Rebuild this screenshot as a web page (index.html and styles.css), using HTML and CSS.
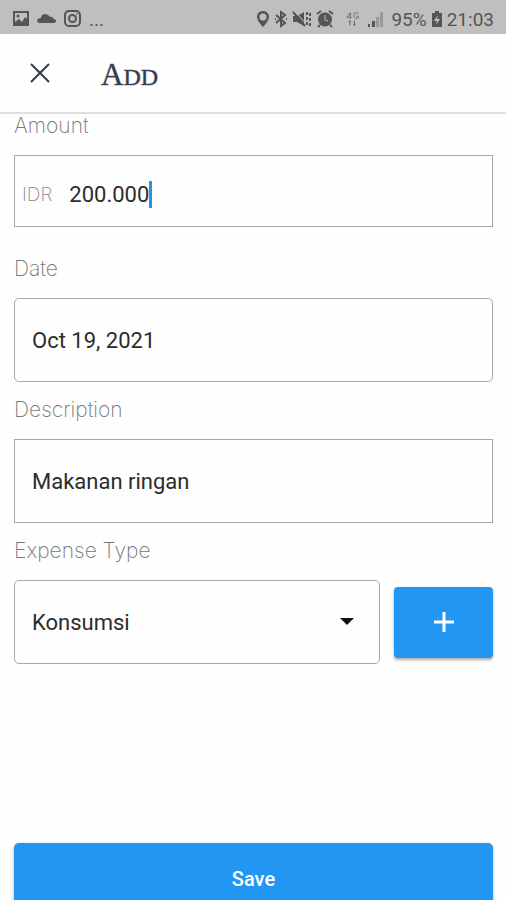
FILE: index.html
```html
<!DOCTYPE html>
<html lang="en">
<head>
<meta charset="utf-8">
<meta name="viewport" content="width=device-width, initial-scale=1">
<title>Add</title>
<link rel="stylesheet" href="styles.css">
</head>
<body>
<div class="status-bar">
  <div class="status-group status-left">
    <svg width="18" height="18" viewBox="0 0 18 18"><path fill-rule="evenodd" d="M1 1h16v15H1zM3 3v9l4-3 3 3 3-5 2 2V3z"/><circle cx="6" cy="6" r="1.5"/></svg>
    <svg width="20" height="18" viewBox="0 0 20 18"><path d="M3 13c-2 0-3-1-3-2.500S2 8 4 8c0-3 2-4 4-4 3 0 4 2 5 3 2-.5 3 .5 3.500 2 2 0 2.500 1 2.500 2s-1 2-2 2z"/></svg>
    <svg class="line-icon" width="18" height="18" viewBox="0 0 18 18"><rect x="1" y="1" width="15" height="15" rx="4"/><circle cx="8.500" cy="8.500" r="3.500"/><path d="M12.500 4h1"/></svg>
    <span class="more">...</span>
  </div>
  <div class="status-group status-right">
    <svg width="14" height="18" viewBox="0 0 14 18"><path fill-rule="evenodd" d="M7 1C3.500 1 1 3.500 1 7c0 4 6 10 6 10s6-6 6-10c0-3.500-2.500-6-6-6zm0 2.500a3.500 3.500 0 1 1 0 7 3.500 3.500 0 0 1 0-7z"/></svg>
    <svg class="line-icon" width="14" height="18" viewBox="0 0 14 18"><path d="M2 5l9 8-4 3V2l4 3-9 8M1 9h1M12 9h1"/></svg>
    <svg width="20" height="18" viewBox="0 0 20 18"><path d="M1 6h4l7-4v14l-7-4H1z"/><path class="gap-line" d="M3 1l11 13"/><path class="stroke" d="M1 2l12 14"/><path class="stroke dashed" d="M15 2v14M18 3v14"/></svg>
    <svg width="18" height="18" viewBox="0 0 18 18"><circle cx="9" cy="9.500" r="7"/><path class="stroke" d="M1 4l4-3M17 4l-4-3M4 15l-2 2M14 15l2 2"/><path class="knock" d="M9 5v5l3 1"/></svg>
    <svg class="network" width="16" height="18" viewBox="0 0 18 18"><path class="thin" d="M6 9V2L2 7h5M15 3c-1-1-5-2-5 2s4 4 5 3V6h-2"/><path d="M4 12h3l-1.500-2zM5 12h1v4H5zM9 15h3l-1.500 2zM10 11h1v4h-1z"/></svg>
    <svg width="17" height="18" viewBox="0 0 17 18"><path d="M1 14h2v3H1zM5 11h3v6H5z"/><path class="faint" d="M9 7h3v10H9zM13 2h3v15h-3z"/></svg>
    <span class="battery-level">95%</span>
    <svg class="battery" width="12" height="18" viewBox="0 0 12 18"><path fill-rule="evenodd" d="M4 1h4v2h3v14H1V3h3zM7 5L3 11h3l-1 4 4-6H6z"/></svg>
    <span>21:03</span>
  </div>
</div>
<header class="app-bar">
  <button class="close" type="button" aria-label="Close"><svg width="20" height="20" viewBox="0 0 20 20"><path d="M1 1l18 18M19 1L1 19"/></svg></button>
  <h1 class="title">A<span class="title-small">DD</span></h1>
</header>
<form class="form">
  <label class="label" for="amount">Amount</label>
  <div class="box amount-box">
    <span class="currency">IDR</span>
    <input class="amount" id="amount" type="text" inputmode="numeric" size="7" value="200.000">
    <span class="caret"></span>
  </div>
  <label class="label" for="date">Date</label>
  <input class="box rounded" id="date" type="text" value="Oct 19, 2021">
  <label class="label" for="description">Description</label>
  <input class="box" id="description" type="text" value="Makanan ringan">
  <label class="label" for="type">Expense Type</label>
  <div class="type-row">
    <div class="select-wrap">
      <select class="box rounded" id="type"><option>Konsumsi</option></select>
      <svg class="arrow" width="14" height="7" viewBox="0 0 14 7"><path d="M0 0h14L7 7z"/></svg>
    </div>
    <button class="add" type="button" aria-label="Add expense type"><svg width="22" height="22" viewBox="0 0 22 22"><path d="M11 1v20M1 11h20"/></svg></button>
  </div>
  <button class="save" type="submit">Save</button>
</form>
</body>
</html>
```
FILE: styles.css
```css
* {
  box-sizing: border-box;
}

body {
  margin: 0;
  height: 100vh;
  overflow: hidden;
  display: flex;
  flex-direction: column;
  background: #fefefe;
  color: #2c2c2c;
  font-family: Roboto, sans-serif;
  font-size: 22px;
}

button,
input,
select {
  font: inherit;
  color: inherit;
}

svg {
  display: block;
  flex: none;
}

.status-bar {
  display: flex;
  flex: none;
  justify-content: space-between;
  height: 34px;
  padding: 4px 12px 0;
  background: #bfbfbf;
  color: #555;
  fill: #555;
  font-size: 19px;
}

.status-group {
  display: flex;
  align-items: center;
}

.status-left {
  gap: 7px;
}

.status-right {
  gap: 4px;
}

.network {
  margin: 0 2px 0 7px;
}

.battery-level {
  margin-left: 3px;
}

.line-icon,
.stroke {
  fill: none;
  stroke: #555;
  stroke-width: 2;
}

.dashed {
  stroke-dasharray: 3 2;
}

.thin {
  fill: none;
  stroke: #666;
}

.gap-line {
  stroke: #bfbfbf;
  stroke-width: 1;
}

.knock {
  fill: none;
  stroke: #bfbfbf;
  stroke-width: 1;
}

.faint {
  fill: #999;
}

.app-bar {
  display: flex;
  flex: none;
  align-items: center;
  gap: 41px;
  height: 80px;
  padding: 0 20px;
  border-bottom: 2px solid #dedede;
}

.close {
  padding: 10px;
  border: 0;
  background: none;
}

.close path {
  stroke: #343b50;
  stroke-width: 2;
}

.title {
  margin: 0;
  padding-top: 6px;
  color: #343b50;
  font: 31px/36px "Liberation Serif", serif;
  -webkit-text-stroke: 1px #343b5066;
}

.title-small {
  font-size: 24px;
}

.form {
  display: flex;
  flex: 1;
  flex-direction: column;
  padding: 0 13px 0 14px;
}

.label {
  margin-bottom: 17px;
  color: #777;
  font: 200 21px/24px Inter, sans-serif;
}

.box {
  width: 100%;
  height: 84px;
  margin: 0 0 16px;
  padding: 0 17px;
  border: 1px solid #a5a9a9;
  border-radius: 0;
  outline: 0;
  background: #fefefe;
}

.rounded {
  border-radius: 5px;
}

.amount-box {
  display: flex;
  align-items: center;
  height: 72px;
  margin-bottom: 30px;
  padding: 7px 7px 0;
}

.currency {
  margin-right: 17px;
  color: #888;
  font: 200 19px/24px Inter, sans-serif;
}

.amount {
  field-sizing: content;
  padding: 0;
  border: 0;
  outline: 0;
  background: none;
}

.caret {
  width: 3px;
  height: 27px;
  background: #2196e8;
}

.type-row {
  display: flex;
  align-items: center;
  gap: 14px;
}

.select-wrap {
  position: relative;
  flex: 1;
}

.select-wrap .box {
  display: block;
  margin: 0;
  appearance: none;
}

.arrow {
  position: absolute;
  top: 38px;
  right: 26px;
  fill: #111;
  pointer-events: none;
}

.add {
  display: grid;
  place-items: center;
  width: 99px;
  height: 71px;
  padding: 0;
  border: 0;
  border-radius: 4px;
  background: #2196f3;
  box-shadow: 0 2px 3px #0005;
}

.add path {
  stroke: #fff;
  stroke-width: 3;
}

.save {
  flex: none;
  height: 72px;
  margin: auto 0 -15px;
  border: 0;
  border-radius: 5px;
  background: #2196f3;
  box-shadow: 0 1px 3px #0005;
  color: #fff;
  font-size: 20px;
  font-weight: 500;
}
```
